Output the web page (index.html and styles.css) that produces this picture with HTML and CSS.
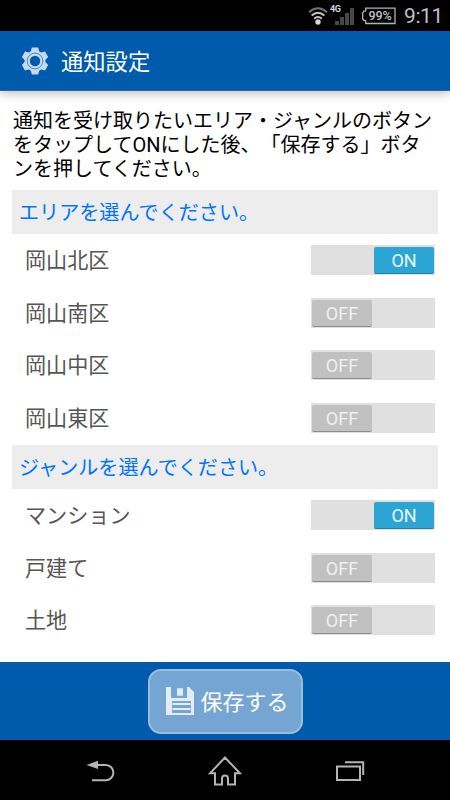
FILE: index.html
```html
<!DOCTYPE html>
<html lang="ja">
<head>
<meta charset="utf-8">
<title>通知設定</title>
<link rel="stylesheet" href="styles.css">
</head>
<body>
<div class="screen">
  <div class="status">
    <svg class="wifi" width="20" height="20" viewBox="0 0 20 20" fill="none" stroke="#c4c4c4" stroke-width="2">
      <path d="M1 6.2Q10-1.6 19 6.2" stroke="#707070"/><path d="M3.6 9.6Q10 4 16.4 9.6"/><path d="M6.2 12.7Q10 9.4 13.8 12.7"/><circle cx="10" cy="16" r="2.7" fill="#d4d4d4" stroke="none"/>
    </svg>
    <div class="signal">
      <span class="network">4G</span>
      <svg width="26" height="20" viewBox="0 0 26 20" fill="#484848"><path d="M6 15h4v4H6zM11 11h4v8h-4zM16 7h4v12h-4zM21 2h4v17h-4z"/></svg>
    </div>
    <div class="battery">
      <svg width="35" height="18" viewBox="0 0 35 18" fill="none" stroke="#b4b4b4" stroke-width="1.3"><path d="M4.7 4.2V1.2H34V16.5H4.7V13.5M4.7 4.2H3L1.7 6V12L3 13.5H4.7"/></svg>
      <span class="percent">99%</span>
    </div>
    <span class="clock">9:11</span>
  </div>
  <header class="header">
    <svg class="gear" width="26" height="28" viewBox="-13 -14 26 28">
      <g fill="#c5daef"><circle r="10.5"/><path d="M-3.2-13.4H3.2L4.6-8H-4.6zM-3.2 13.4H3.2L4.6 8H-4.6z"/><path transform="rotate(60)" d="M-3.2-13.4H3.2L4.6-8H-4.6zM-3.2 13.4H3.2L4.6 8H-4.6z"/><path transform="rotate(120)" d="M-3.2-13.4H3.2L4.6-8H-4.6zM-3.2 13.4H3.2L4.6 8H-4.6z"/></g>
      <circle r="7.9" fill="none" stroke="#2c73b9" stroke-width=".8"/><circle r="5.2" fill="#005bac"/>
    </svg>
    <h1 class="title">通知設定</h1>
  </header>
  <main class="content">
    <p class="intro">通知を受け取りたいエリア・ジャンルのボタン<br>をタップしてONにした後、「保存する」ボタ<br>ンを押してください。</p>
    <h2 class="section">エリアを選んでください。</h2>
    <div class="row"><span class="label">岡山北区</span><div class="toggle on"><span class="thumb">ON</span></div></div>
    <div class="row"><span class="label">岡山南区</span><div class="toggle"><span class="thumb">OFF</span></div></div>
    <div class="row"><span class="label">岡山中区</span><div class="toggle"><span class="thumb">OFF</span></div></div>
    <div class="row"><span class="label">岡山東区</span><div class="toggle"><span class="thumb">OFF</span></div></div>
    <h2 class="section">ジャンルを選んでください。</h2>
    <div class="row"><span class="label">マンション</span><div class="toggle on"><span class="thumb">ON</span></div></div>
    <div class="row"><span class="label">戸建て</span><div class="toggle"><span class="thumb">OFF</span></div></div>
    <div class="row"><span class="label">土地</span><div class="toggle"><span class="thumb">OFF</span></div></div>
  </main>
  <footer class="footer">
    <button class="save">
      <svg width="28" height="28" viewBox="0 0 28 28"><path fill="#e4edf6" fill-rule="evenodd" d="M0 0H5V11H21V0H23L28 5V28H0zM6 14V26H25V14z"/><path fill="#e4edf6" d="M11 1.3h6v7.5h-6zM6.5 16h18v2h-18zM6.5 21h18v2h-18z"/></svg>
      <span class="save-label">保存する</span>
    </button>
  </footer>
  <nav class="nav">
    <svg width="30" height="24" viewBox="0 0 30 24"><path d="M9 6H19.8A7.6 7.6 0 0 1 19.8 21.2H6" fill="none" stroke="#b4b4b4" stroke-width="2"/><path d="M.5 6L12 1.8V10z" fill="#b4b4b4"/></svg>
    <svg class="home" width="34" height="32" viewBox="0 0 34 32" fill="none" stroke="#b4b4b4" stroke-width="2"><path d="M17 2.5L2 18.3H7V29.4H14V23.5A3 3 0 0 1 20 23.5V29.4H27V18.3H32z"/></svg>
    <svg width="30" height="22" viewBox="0 0 30 22" fill="none" stroke="#b4b4b4" stroke-width="2"><path d="M2 6.5H25V20H2zM10 2.3H28.2V15"/></svg>
  </nav>
</div>
</body>
</html>
```
FILE: styles.css
```css
* { box-sizing: border-box; }
body { margin: 0; background: #000; font-family: "Noto Sans CJK JP", sans-serif; text-spacing-trim: space-all; font-feature-settings: "chws" 0; }
.screen { width: 450px; height: 800px; display: flex; flex-direction: column; overflow: hidden; background: #fff; }
svg { display: block; flex: none; }
h1, h2, p { margin: 0; font-weight: 400; }

.status { height: 31px; flex: none; display: flex; align-items: center; justify-content: flex-end; padding-right: 9px; background: #000; color: #c0c0c0; font-family: Roboto, sans-serif; }
.wifi { margin: 0 1px 0 0; }
.signal { position: relative; margin-right: 6px; }
.signal svg { margin-top: 1px; }
.network { position: absolute; left: 1px; top: 0; font-size: 9px; line-height: 9px; font-weight: 700; color: #d8d8d8; letter-spacing: -.3px; }
.battery { position: relative; width: 35px; height: 18px; }
.percent { position: absolute; left: 3px; right: 0; top: 0; font-size: 12.5px; line-height: 18px; font-weight: 500; text-align: center; letter-spacing: -.2px; }
.clock { width: 37px; margin-left: 8px; font-size: 21px; line-height: 31px; white-space: nowrap; letter-spacing: -.4px; position: relative; top: 1px; }

.header { height: 60px; flex: none; display: flex; align-items: center; padding: 1px 0 0 22px; background: #005bac; border-bottom: 1px solid #2469ac; box-shadow: 0 2px 10px rgba(0,0,0,.28); color: #fff; }
.title { margin-left: 13px; padding-bottom: 3px; font-size: 22.3px; line-height: 30px; font-weight: 400; }

.content { height: 571px; flex: none; padding: 18px 12px 0; }
.intro { height: 81px; padding-left: 1px; font-size: 20px; line-height: 24px; color: #000; white-space: nowrap; font-family: Roboto, "Noto Sans CJK JP", sans-serif; }
.section { height: 44.4px; padding-left: 7px; font-size: 20.1px; line-height: 44px; background: #ededed; color: #0073ff; }
.row { height: 52.6px; display: flex; align-items: center; justify-content: space-between; padding: 0 3px 0 13px; }
.label { padding-bottom: 3px; font-size: 21.1px; line-height: 30px; color: #555; }
.toggle { width: 124px; height: 30px; display: flex; margin-bottom: 1px; padding: 2px 1px 1px; background: #e0e0e0; }
.toggle.on { justify-content: flex-end; }
.thumb { width: 60px; height: 27px; border-radius: 2px; border-bottom: 1px solid #8c8c8c; background: #c1c1c1; color: #f0f0f0; font: 18px/27px Roboto, sans-serif; text-align: center; }
.on .thumb { background: #2ba5d3; border-color: #2181a5; color: #eef8fc; }

.footer { height: 78px; flex: none; display: flex; justify-content: center; padding-top: 7px; background: #005bac; }
.save { width: 155px; height: 65px; display: flex; align-items: center; gap: 7px; padding: 0 0 1px 16px; border: 2px solid #9bbddd; border-radius: 13px; background: #75a5d2; color: #fff; font: 22px/30px "Noto Sans CJK JP", sans-serif; white-space: nowrap; }
.save-label { padding-bottom: 3px; }

.nav { height: 60px; flex: none; display: flex; align-items: center; justify-content: space-between; padding: 1px 85px 0 86px; background: #000; }
.home { margin-right: 2px; }
```
